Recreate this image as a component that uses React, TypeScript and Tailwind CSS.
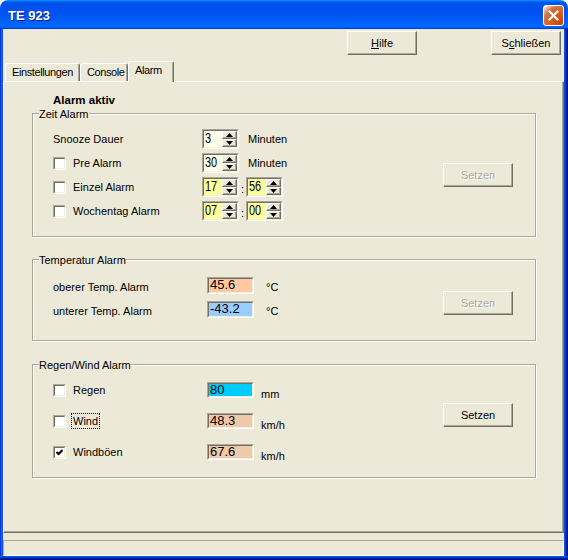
import React from "react";
import clsx from "clsx";

// classic 3D edges
const raised =
  "border border-t-white border-l-white border-r-[#716F64] border-b-[#716F64] shadow-[inset_-1px_-1px_0_#ACA899]";
const sunkenOuter = "border border-t-[#ACA899] border-l-[#ACA899] border-r-white border-b-white";
const sunkenInner = "border border-t-[#716F64] border-l-[#716F64] border-r-[#F1EFE2] border-b-[#F1EFE2]";

function Button({ children, disabled }: { children: React.ReactNode; disabled?: boolean }) {
  return (
    <button
      type="button"
      className={clsx(
        "flex h-[24px] w-[70px] items-center justify-center bg-[#ECE9D8] text-[11px] leading-[14px]",
        raised,
        disabled ? "text-[#ACA899] [text-shadow:1px_1px_0_#fff]" : "text-black"
      )}
    >
      {children}
    </button>
  );
}

function SpinHalf({ up }: { up?: boolean }) {
  return (
    <div className={clsx("flex h-[8px] items-center justify-center bg-[#ECE9D8]", raised)}>
      <svg width="7" height="4" viewBox="0 0 7 4">
        <path d={up ? "M3.5 0 L7 4 L0 4 Z" : "M0 0 L7 0 L3.5 4 Z"} fill="#000" />
      </svg>
    </div>
  );
}

function Spin({ value, bg }: { value: string; bg: string }) {
  return (
    <div className={clsx("flex h-[20px] w-[37px] shrink-0", sunkenOuter)}>
      <div className={clsx("flex flex-1", sunkenInner, bg)}>
        <div className="flex-1 overflow-hidden pl-[1px]">
          <span className="inline-block origin-left scale-x-[0.78] text-[14px] leading-[15px]">{value}</span>
        </div>
        <div className="flex w-[15px] flex-col">
          <SpinHalf up />
          <SpinHalf />
        </div>
      </div>
    </div>
  );
}

function Field({ value, bg, tall }: { value: string; bg: string; tall?: boolean }) {
  return (
    <div className={clsx("w-[47px] shrink-0", tall ? "h-[17px]" : "h-[16px]", sunkenOuter)}>
      <div className={clsx("h-full overflow-hidden pl-[1px] text-[13px] leading-[12px]", sunkenInner, bg)}>{value}</div>
    </div>
  );
}

function Check({ checked }: { checked?: boolean }) {
  return (
    <div className={clsx("h-[13px] w-[13px] shrink-0", sunkenOuter)}>
      <div className={clsx("flex h-full items-center justify-center bg-white", sunkenInner)}>
        {checked && (
          <svg width="7" height="7" viewBox="0 0 7 7">
            <path d="M0.5 3 L2.5 5 L6.5 1" stroke="#000" strokeWidth="2" fill="none" />
          </svg>
        )}
      </div>
    </div>
  );
}

function CheckLabel({ label, checked, focus }: { label: string; checked?: boolean; focus?: boolean }) {
  return (
    <div className="flex items-center">
      <Check checked={checked} />
      <span
        className={clsx(
          "ml-[5px] border px-[1px] leading-[14px]",
          focus ? "border-dotted border-black" : "border-transparent"
        )}
      >
        {label}
      </span>
    </div>
  );
}

function Group({ title, className, children }: { title: string; className?: string; children: React.ReactNode }) {
  return (
    <div
      className={clsx(
        "relative ml-[28px] w-[504px] border border-[#ACA899] shadow-[inset_1px_1px_0_#fff,1px_1px_0_#fff]",
        className
      )}
    >
      <span className="absolute left-[6px] top-[-6px] bg-[#ECE9D8] leading-[13px]">{title}</span>
      {children}
    </div>
  );
}

function Tab({ label, className, active }: { label: string; className: string; active?: boolean }) {
  return (
    <div
      className={clsx(
        "rounded-t-[3px] border-l border-r border-t border-l-white border-r-[#716F64] border-t-white bg-[#ECE9D8] pl-[6px] pt-[1px] text-[11px] leading-[14px] tracking-[-0.4px] shadow-[inset_-1px_0_0_#ACA899]",
        active ? "relative z-10 -mb-px h-[21px]" : "h-[18px]",
        className
      )}
    >
      {label}
    </div>
  );
}

function MinRow({ label, value, bg }: { label: React.ReactNode; value: string; bg: string }) {
  return (
    <div className="flex h-[20px] items-center">
      <div className="w-[149px]">{label}</div>
      <Spin value={value} bg={bg} />
      <span className="ml-[9px] leading-[14px]">Minuten</span>
    </div>
  );
}

function TimeRow({ label, h, m }: { label: React.ReactNode; h: string; m: string }) {
  return (
    <div className="flex h-[20px] items-center">
      <div className="w-[149px]">{label}</div>
      <Spin value={h} bg="bg-[#FFFF99]" />
      <span className="w-[7px] pt-[3px] text-center leading-[14px]">:</span>
      <Spin value={m} bg="bg-[#FFFF99]" />
    </div>
  );
}

export default function App() {
  return (
    <div className="h-[560px] w-[568px] bg-white font-['Liberation_Sans',Arial,sans-serif] text-[11px] text-black">
      {/* Title bar */}
      <div className="flex h-[29px] justify-between rounded-t-[8px] bg-[linear-gradient(180deg,#0997ff,#0053ee_8%,#0050ee_40%,#0066ff_88%,#0066ff_93%,#005bff_95%,#003dd7_96%,#003dd7)]">
        <div className="pl-[8px] pt-[8px] text-[13px] font-bold leading-[16px] text-white [text-shadow:1px_1px_0_#0A1883]">
          TE 923
        </div>
        <div className="mr-[4px] mt-[5px] flex h-[21px] w-[21px] items-center justify-center rounded-[3px] border border-white bg-[radial-gradient(circle_at_90%_90%,#cc4600_0%,#dc6527_55%,#cd7546_70%,#ffccb2_90%,#fff_100%)]">
          <svg width="11" height="11" viewBox="0 0 11 11">
            <path d="M1.5 1.5 L9.5 9.5 M9.5 1.5 L1.5 9.5" stroke="#fff" strokeWidth="2.2" strokeLinecap="square" />
          </svg>
        </div>
      </div>

      <div className="flex h-[527px]">
        <div className="w-[3px] bg-[linear-gradient(to_right,#0831D9_0px,#0831D9_1px,#166AEE_1px,#166AEE_2px,#0855DD_2px,#0855DD_3px)]" />

        {/* Client area */}
        <div className="flex flex-1 flex-col bg-[#ECE9D8]">
          <div className="flex justify-end gap-[74px] pr-[3px] pt-[2px]">
            <Button>
              <span className="underline">H</span>ilfe
            </Button>
            <Button>
              S<span className="underline">c</span>hließen
            </Button>
          </div>

          <div className="mt-[6px] flex h-[20px] items-end pl-[2px]">
            <Tab label="Einstellungen" className="w-[75px]" />
            <Tab label="Console" className="w-[48px]" />
            <Tab label="Alarm" className="w-[46px]" active />
          </div>

          {/* Tab panel */}
          <div className={clsx("flex h-[452px] flex-col bg-[#ECE9D8]", raised)}>
            <div className="ml-[49px] mt-[11px] text-[11.5px] font-bold leading-[14px]">Alarm aktiv</div>

            <Group title="Zeit Alarm" className="mt-[6px] h-[124px]">
              <div className="flex">
                <div className="flex flex-col gap-[4px] pl-[20px] pt-[15px]">
                  <MinRow label={<span className="leading-[14px]">Snooze Dauer</span>} value="3" bg="bg-[#FFFFE8]" />
                  <MinRow label={<CheckLabel label="Pre Alarm" />} value="30" bg="bg-[#FFFFE8]" />
                  <TimeRow label={<CheckLabel label="Einzel Alarm" />} h="17" m="56" />
                  <TimeRow label={<CheckLabel label="Wochentag Alarm" />} h="07" m="00" />
                </div>
                <div className="ml-auto mr-[22px] mt-[49px]">
                  <Button disabled>Setzen</Button>
                </div>
              </div>
            </Group>

            <Group title="Temperatur Alarm" className="mt-[22px] h-[82px]">
              <div className="flex">
                <div className="flex flex-col gap-[7px] pl-[20px] pt-[17px]">
                  <div className="flex h-[17px] items-end">
                    <div className="w-[154px] leading-[13px]">oberer Temp. Alarm</div>
                    <Field value="45.6" bg="bg-[#FFC8A0]" tall />
                    <span className="ml-[12px] leading-[13px]">°C</span>
                  </div>
                  <div className="flex h-[17px] items-end">
                    <div className="w-[154px] leading-[13px]">unterer Temp. Alarm</div>
                    <Field value="-43.2" bg="bg-[#99CCFF]" tall />
                    <span className="ml-[12px] leading-[13px]">°C</span>
                  </div>
                </div>
                <div className="ml-auto mr-[22px] mt-[31px]">
                  <Button disabled>Setzen</Button>
                </div>
              </div>
            </Group>

            <Group title="Regen/Wind Alarm" className="mt-[23px] h-[114px]">
              <div className="flex">
                <div className="flex flex-col gap-[15px] pl-[20px] pt-[17px]">
                  <div className="flex h-[16px] items-center">
                    <div className="w-[154px]">
                      <CheckLabel label="Regen" />
                    </div>
                    <Field value="80" bg="bg-[#00CCFF]" />
                    <span className="ml-[7px] mt-[8px] leading-[14px]">mm</span>
                  </div>
                  <div className="flex h-[16px] items-center">
                    <div className="w-[154px]">
                      <CheckLabel label="Wind" focus />
                    </div>
                    <Field value="48.3" bg="bg-[#F0C8AA]" />
                    <span className="ml-[7px] mt-[8px] leading-[14px]">km/h</span>
                  </div>
                  <div className="flex h-[16px] items-center">
                    <div className="w-[154px]">
                      <CheckLabel label="Windböen" checked />
                    </div>
                    <Field value="67.6" bg="bg-[#F0C8AA]" />
                    <span className="ml-[7px] mt-[8px] leading-[14px]">km/h</span>
                  </div>
                </div>
                <div className="ml-auto mr-[22px] mt-[38px]">
                  <Button>Setzen</Button>
                </div>
              </div>
            </Group>
          </div>

          {/* Status bar */}
          <div className={clsx("mt-[7px] h-[16px]", sunkenOuter)} />
        </div>

        <div className="w-[4px] bg-[linear-gradient(to_right,#0855DD_0px,#0855DD_1px,#003BDA_1px,#003BDA_2px,#001EA0_2px,#001EA0_3px,#00138C_3px,#00138C_4px)]" />
      </div>
      <div className="h-[4px] bg-[linear-gradient(to_bottom,#0855DD_0px,#0855DD_1px,#003BDA_1px,#003BDA_2px,#001EA0_2px,#001EA0_3px,#00138C_3px,#00138C_4px)]" />
    </div>
  );
}
